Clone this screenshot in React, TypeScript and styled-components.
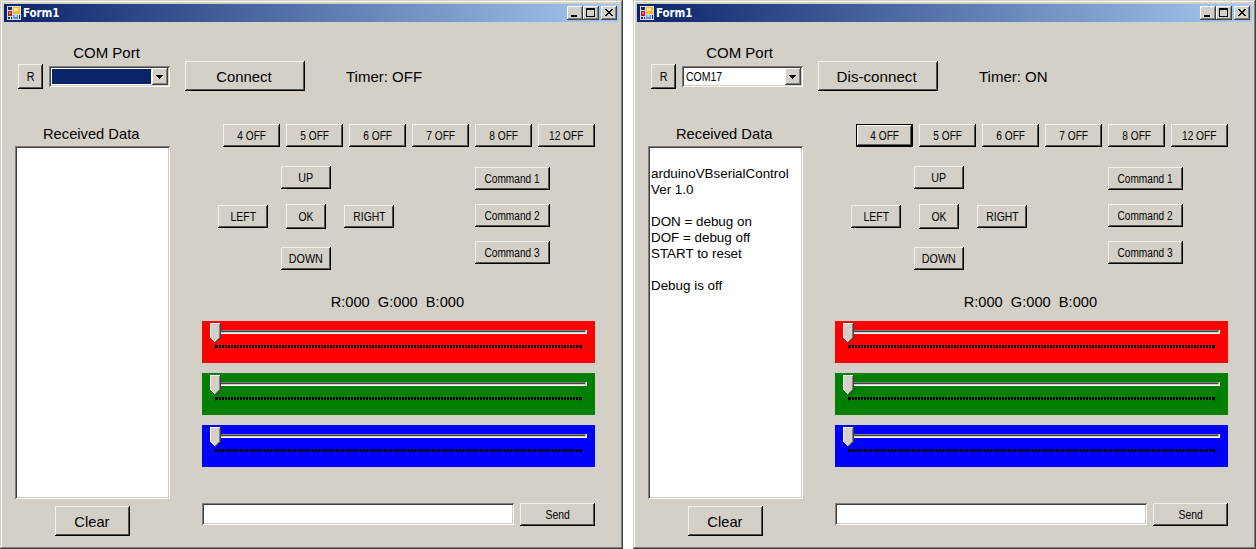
import React from "react";
import styled, { createGlobalStyle, css } from "styled-components";

const face = "#d4d0c8";

const GlobalStyle = createGlobalStyle`
  * { box-sizing: border-box; }
  body {
    margin: 0;
    background: #fff;
    color: #000;
    font-family: "Liberation Sans", Arial, sans-serif;
    overflow: hidden;
  }
`;

const Desktop = styled.main`
  display: flex;
  gap: 10px;
  width: 1256px;
  height: 549px;
`;

const Frame = styled.section`
  flex: none;
  width: 623px;
  height: 549px;
  padding: 4px;
  background: ${face};
  box-shadow: inset -1px -1px #404040, inset 1px 1px ${face}, inset -2px -2px #808080,
    inset 2px 2px #fff;
`;

const TitleBar = styled.header`
  display: flex;
  align-items: center;
  height: 18px;
  padding: 0 2px 0 3px;
  background: linear-gradient(to right, #0a246a, #a6caf0);
`;

const Title = styled.h1`
  flex: 1;
  margin: 0 0 0 2px;
  color: #fff;
  font: bold 11.5px/18px "DejaVu Sans Condensed", "DejaVu Sans", sans-serif;
  letter-spacing: -0.1px;
`;

const raised = css`
  background: ${face};
  box-shadow: inset -1px -1px #404040, inset 1px 1px #fff, inset -2px -2px #808080;
`;

const sunken = css`
  background: #fff;
  box-shadow: inset 1px 1px #808080, inset -1px -1px #fff, inset 2px 2px #404040,
    inset -2px -2px ${face};
`;

const CaptionButton = styled.button<{ $apart?: boolean }>`
  ${raised}
  display: block;
  width: 16px;
  height: 14px;
  margin: 0 0 0 ${(p) => (p.$apart ? 2 : 0)}px;
  padding: 0;
  border: 0;
  svg { display: block; }
`;

const Body = styled.div`
  display: flex;
  gap: 15px;
  padding: 22px 24px 0 11px;
`;

const SideColumn = styled.div`
  display: flex;
  flex-direction: column;
  flex: none;
  width: 155px;
`;

const MainColumn = styled.div`
  display: flex;
  flex-direction: column;
  flex: none;
  width: 410px;
  padding-top: 17px;
`;

const Scaled = styled.span<{ $x: number; $left?: boolean }>`
  display: inline-block;
  white-space: pre;
  transform: scaleX(${(p) => p.$x});
  transform-origin: ${(p) => (p.$left ? "left" : "center")};
`;

const Label = styled.div<{ $before?: number; $after?: number }>`
  height: 18px;
  padding: 0 ${(p) => p.$after || 0}px 0 ${(p) => p.$before || 0}px;
  font-size: 15px;
  line-height: 18px;
  text-align: center;
`;

const Button = styled.button<{ $w: number; $h?: number; $large?: boolean; $focus?: boolean }>`
  display: flex;
  flex: none;
  align-items: center;
  justify-content: center;
  width: ${(p) => p.$w}px;
  height: ${(p) => p.$h || 23}px;
  padding: 1px ${(p) => (p.$large ? 2 : 0)}px 0 0;
  border: 0;
  color: #000;
  background: ${face};
  font-family: inherit;
  font-size: ${(p) => (p.$large ? 15 : 12.5)}px;
  line-height: 16px;
  box-shadow: ${(p) =>
    p.$focus
      ? `inset 0 0 0 1px #000, inset -2px -2px #000, inset 2px 2px #fff, inset -3px -3px #606060`
      : `inset -1px -1px #000, inset 1px 1px #f4f2ee, inset -2px -2px #555550`};
`;

const PortRow = styled.div`
  display: flex;
  align-items: center;
  gap: 6px;
  margin: 2px 0 36px 3px;
`;

const Combo = styled.div`
  ${sunken}
  display: flex;
  flex: none;
  width: 121px;
  height: 21px;
  padding: 2px;
`;

const ComboValue = styled.div<{ $selected: boolean }>`
  flex: 1;
  padding-left: 2px;
  border: ${(p) => (p.$selected ? 1 : 0)}px solid #fff;
  background: ${(p) => (p.$selected ? "#0a246a" : "#fff")};
  font-size: 12.5px;
  line-height: 18px;
`;

const ComboArrow = styled.div`
  ${raised}
  flex: none;
  width: 16px;
  height: 17px;
  svg { display: block; }
`;

const Output = styled.div`
  ${sunken}
  height: 353px;
  margin: 3px 0 7px;
  padding: 4px 2px 4px 3px;
  font-size: 13.4px;
  line-height: 16px;
  white-space: pre;
`;

const ClearRow = styled.div`
  display: flex;
  justify-content: center;
`;

const ConnectRow = styled.div`
  display: flex;
  align-items: center;
  gap: 41px;
  height: 30px;
`;

const TimerLabel = styled(Label)`
  height: 20px;
  line-height: 22px;
`;

const PinRow = styled.div`
  display: flex;
  gap: 6px;
  margin: 33px 0 19px 38px;
`;

const Controls = styled.div`
  display: flex;
  align-items: flex-start;
  gap: 81px;
  margin-left: 33px;
`;

const Pad = styled.div`
  display: flex;
  flex-direction: column;
  align-items: center;
  width: 176px;
`;

const PadMiddle = styled.div`
  display: flex;
  align-items: center;
  gap: 18px;
  margin: 15px 0 18px;
`;

const Commands = styled.div`
  display: flex;
  flex-direction: column;
  gap: 14px;
  padding-top: 1px;
`;

const Mixer = styled.div`
  display: flex;
  flex-direction: column;
  gap: 10px;
  margin: 23px 0 36px 17px;
`;

const Slider = styled.div<{ $color: string }>`
  height: 42px;
  background: ${(p) => p.$color};
  svg { display: block; }
`;

const SendRow = styled.div`
  display: flex;
  gap: 6px;
  margin-left: 17px;
`;

const Entry = styled.div`
  ${sunken}
  width: 312px;
  height: 22px;
`;

function FormIcon() {
  return (
    <svg width="14" height="14" viewBox="0 0 14 14" shapeRendering="crispEdges">
      <rect width="14" height="14" fill="#d8dce8" />
      <rect x="1" y="1" width="4" height="3" fill="#142c70" />
      <rect x="6" y="1" width="7" height="7" fill="#f2bd32" />
      <rect x="7" y="2" width="4" height="3" fill="#ffe88c" />
      <rect x="1" y="5" width="4" height="5" fill="#b51d22" />
      <rect x="2" y="6" width="2" height="2" fill="#ee7770" />
      <rect x="1" y="11" width="2" height="2" fill="#142c70" />
      <rect x="4" y="11" width="1" height="2" fill="#142c70" />
      <rect x="6" y="9" width="5" height="4" fill="#5b91df" />
      <rect x="7" y="9" width="3" height="2" fill="#a7cbfa" />
      <rect x="12" y="9" width="1" height="4" fill="#142c70" />
    </svg>
  );
}

function CaptionButtons() {
  return (
    <>
      <CaptionButton aria-label="Minimize">
        <svg width="16" height="14" shapeRendering="crispEdges">
          <path d="M4 9h6v2H4z" />
        </svg>
      </CaptionButton>
      <CaptionButton aria-label="Maximize">
        <svg width="16" height="14" shapeRendering="crispEdges">
          <path fillRule="evenodd" d="M3 2h9v9H3zM4 4v6h7V4z" />
        </svg>
      </CaptionButton>
      <CaptionButton $apart aria-label="Close">
        <svg width="16" height="14" shapeRendering="crispEdges">
          <path d="M4 3h2v1h1v1h2V4h1V3h2v1h-1v1h-1v1H9v1h1v1h1v1h1v1h-2V9H9V8H7v1H6v1H4V9h1V8h1V7h1V6H6V5H5V4H4z" />
        </svg>
      </CaptionButton>
    </>
  );
}

function ColorSlider({ color }: { color: string }) {
  return (
    <Slider $color={color}>
      <svg width="393" height="42" shapeRendering="crispEdges">
        <path fill="#fff" d="M8 9h377v4H8z" />
        <path fill={face} d="M8 9h376v3H8z" />
        <path fill="#808080" d="M8 9h376v1H8z" />
        <path fill="#404040" d="M9 10h374v1H9z" />
        <path d="M14 25.5H380" stroke="#000" strokeWidth="3" strokeDasharray="2 1" />
        <path d="M13 24h1v4h-1zM379 24h1v4h-1z" />
        <path fill={face} d="M8 2h11v15h-1v1h-1v1h-1v1h-1v1h-1v1h-1v-1h-1v-1h-1v-1h-1v-1H9v-1H8z" />
        <path fill="#fff" d="M8 2h10v1H9v14H8zM9 17h1v1H9zM10 18h1v1h-1zM11 19h1v1h-1zM12 20h1v1h-1z" />
        <path fill="#808080" d="M17 3h1v14h-1zM16 17h1v1h-1zM15 18h1v1h-1zM14 19h1v1h-1zM13 20h1v1h-1z" />
        <path fill="#404040" d="M18 2h1v15h-1zM17 17h1v1h-1zM16 18h1v1h-1zM15 19h1v1h-1zM14 20h1v1h-1zM13 21h1v1h-1z" />
      </svg>
    </Slider>
  );
}

type FormProps = {
  port: string;
  action: string;
  actionScale: number;
  timer: string;
  output: string[];
  focusFirst?: boolean;
};

const pins = ["4", "5", "6", "7", "8", "12"];

function SerialForm({ port, action, actionScale, timer, output, focusFirst }: FormProps) {
  return (
    <Frame>
      <TitleBar>
        <FormIcon />
        <Title>Form1</Title>
        <CaptionButtons />
      </TitleBar>
      <Body>
        <SideColumn>
          <Label $before={28}><Scaled $x={1}>COM Port</Scaled></Label>
          <PortRow>
            <Button $w={25} $h={25}><Scaled $x={0.86}>R</Scaled></Button>
            <Combo>
              <ComboValue $selected={!port}><Scaled $x={0.84} $left>{port}</Scaled></ComboValue>
              <ComboArrow>
                <svg width="16" height="17" shapeRendering="crispEdges">
                  <path d="M4 7h7v1h-1v1H9v1H8v1H7v-1H6V9H5V8H4z" />
                </svg>
              </ComboArrow>
            </Combo>
          </PortRow>
          <Label $after={3}><Scaled $x={0.98}>Received Data</Scaled></Label>
          <Output>{output.join("\n")}</Output>
          <ClearRow>
            <Button $w={75} $h={30} $large><Scaled $x={0.98}>Clear</Scaled></Button>
          </ClearRow>
        </SideColumn>
        <MainColumn>
          <ConnectRow>
            <Button $w={120} $h={30} $large><Scaled $x={actionScale}>{action}</Scaled></Button>
            <TimerLabel><Scaled $x={1} $left>{timer}</Scaled></TimerLabel>
          </ConnectRow>
          <PinRow>
            {pins.map((pin, i) => (
              <Button key={pin} $w={57} $focus={focusFirst && i === 0}>
                <Scaled $x={0.81}>{pin} OFF</Scaled>
              </Button>
            ))}
          </PinRow>
          <Controls>
            <Pad>
              <Button $w={50}><Scaled $x={0.86}>UP</Scaled></Button>
              <PadMiddle>
                <Button $w={50}><Scaled $x={0.83}>LEFT</Scaled></Button>
                <Button $w={40} $h={25}><Scaled $x={0.83}>OK</Scaled></Button>
                <Button $w={50}><Scaled $x={0.83}>RIGHT</Scaled></Button>
              </PadMiddle>
              <Button $w={50}><Scaled $x={0.86}>DOWN</Scaled></Button>
            </Pad>
            <Commands>
              {[1, 2, 3].map((n) => (
                <Button key={n} $w={75}><Scaled $x={0.81}>Command {n}</Scaled></Button>
              ))}
            </Commands>
          </Controls>
          <Mixer>
            <Label $after={2}><Scaled $x={0.975}>{"R:000  G:000  B:000"}</Scaled></Label>
            <ColorSlider color="#ff0000" />
            <ColorSlider color="#008000" />
            <ColorSlider color="#0000ff" />
          </Mixer>
          <SendRow>
            <Entry />
            <Button $w={75}><Scaled $x={0.83}>Send</Scaled></Button>
          </SendRow>
        </MainColumn>
      </Body>
    </Frame>
  );
}

export default function App() {
  return (
    <>
      <GlobalStyle />
      <Desktop>
        <SerialForm port="" action="Connect" actionScale={0.99} timer="Timer: OFF" output={[]} />
        <SerialForm
          port="COM17"
          action="Dis-connect"
          actionScale={1.01}
          timer="Timer: ON"
          focusFirst
          output={[
            "",
            "arduinoVBserialControl",
            "Ver 1.0",
            "",
            "DON = debug on",
            "DOF = debug off",
            "START to reset",
            "",
            "Debug is off",
          ]}
        />
      </Desktop>
    </>
  );
}
